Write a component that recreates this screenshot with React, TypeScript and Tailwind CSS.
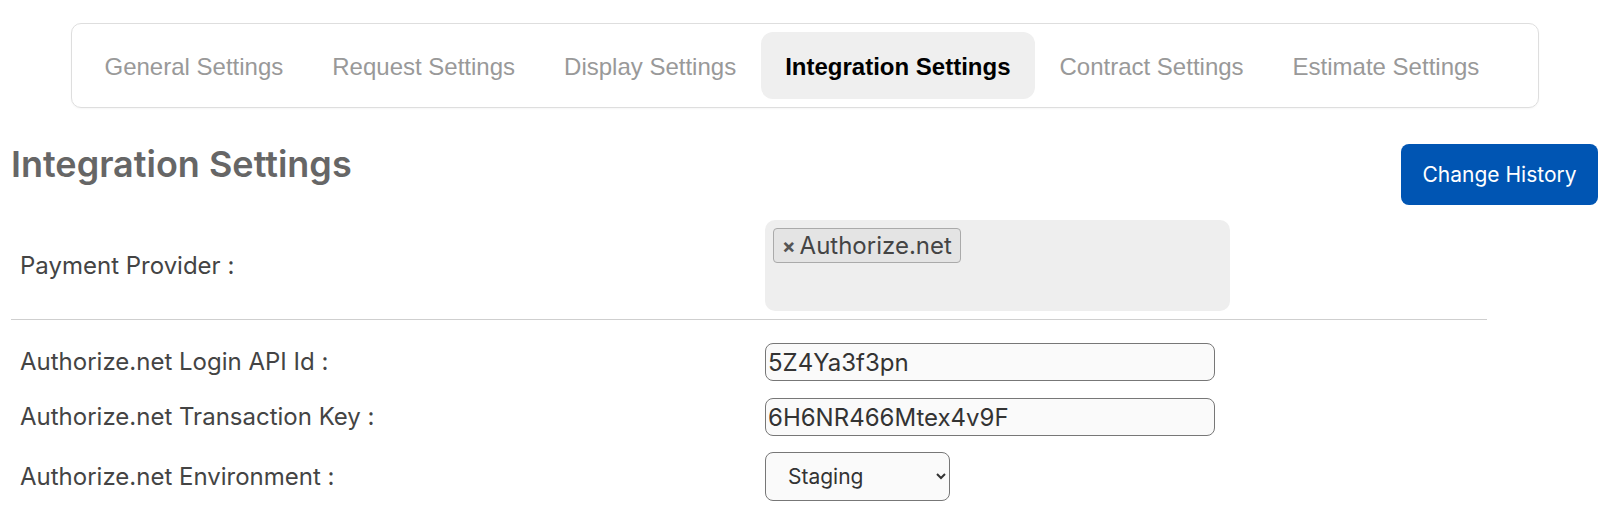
import { useState } from "react";

const TABS = [
  "General Settings",
  "Request Settings",
  "Display Settings",
  "Integration Settings",
  "Contract Settings",
  "Estimate Settings",
];

function Row({ label, children, className = "" }: { label: string; children: React.ReactNode; className?: string }) {
  return (
    <div className={`flex items-center ${className}`}>
      <label className="w-[754px] shrink-0 pl-[9px] text-[24px] text-[#444]">{label}</label>
      {children}
    </div>
  );
}

export default function App() {
  const [active, setActive] = useState("Integration Settings");
  const [env, setEnv] = useState("staging");

  return (
    <div className="min-h-[531px] bg-white font-['Inter',sans-serif]">
      {/* ── Tabs ── */}
      <div className="pt-[23px] pl-[71px]">
        <nav className="flex w-[1468px] rounded-[10px] border border-[#dedede] px-[8px] py-[8px] shadow-[0_1px_2px_rgba(0,0,0,0.04)] font-['Liberation_Sans',Arial,sans-serif]">
          {TABS.map((t) => (
            <button
              key={t}
              onClick={() => setActive(t)}
              className={`rounded-[12px] px-[24.5px] pt-[21px] pb-[18px] text-[24px] leading-[28px] ${
                active === t ? "bg-[#efefef] font-bold text-black" : "text-[#999]"
              }`}
            >
              {t}
            </button>
          ))}
        </nav>
      </div>

      {/* ── Header ── */}
      <div className="flex items-start justify-between pl-[11px] pr-[26px] pt-[36px]">
        <h1 className="text-[36px] font-semibold leading-[40px] text-[#666]">
          Integration Settings
        </h1>
        <button className="h-[61px] w-[197px] rounded-[8px] bg-[#0055b3] text-[21px] text-white">
          Change History
        </button>
      </div>

      {/* ── Form ── */}
      <div className="ml-[11px] w-[1476px] pt-[15px]">
        <Row label="Payment Provider :" className="border-b border-[#cfcfcf] pb-[8px]">
          <div className="h-[91px] w-[465px] rounded-[10px] bg-[#eeeeee] p-[8px]">
            <span className="inline-flex h-[35px] items-center gap-[4px] rounded-[4px] border border-[#aaa] bg-[#e4e4e4] px-[8px] text-[24px] text-[#444]">
              <span className="text-[20px] font-bold text-[#555]">×</span>
              Authorize.net
            </span>
          </div>
        </Row>

        <Row label="Authorize.net Login API Id :" className="mt-[23px]">
          <input
            readOnly
            value="5Z4Ya3f3pn"
            className="h-[38px] w-[450px] rounded-[8px] border border-[#777] bg-[#fafafa] px-[2px] text-[24px] text-[#333] outline-none"
          />
        </Row>

        <Row label="Authorize.net Transaction Key :" className="mt-[17px]">
          <input
            readOnly
            value="6H6NR466Mtex4v9F"
            className="h-[38px] w-[450px] rounded-[8px] border border-[#777] bg-[#fafafa] px-[2px] text-[24px] text-[#333] outline-none"
          />
        </Row>

        <Row label="Authorize.net Environment :" className="mt-[16px]">
          <select
            value={env}
            onChange={(e) => setEnv(e.target.value)}
            className="h-[49px] w-[185px] rounded-[8px] border border-[#777] bg-[#fafafa] pl-[18px] pr-[8px] text-[21px] text-[#333]"
          >
            <option value="staging">Staging</option>
            <option value="production">Production</option>
          </select>
        </Row>
      </div>
    </div>
  );
}
